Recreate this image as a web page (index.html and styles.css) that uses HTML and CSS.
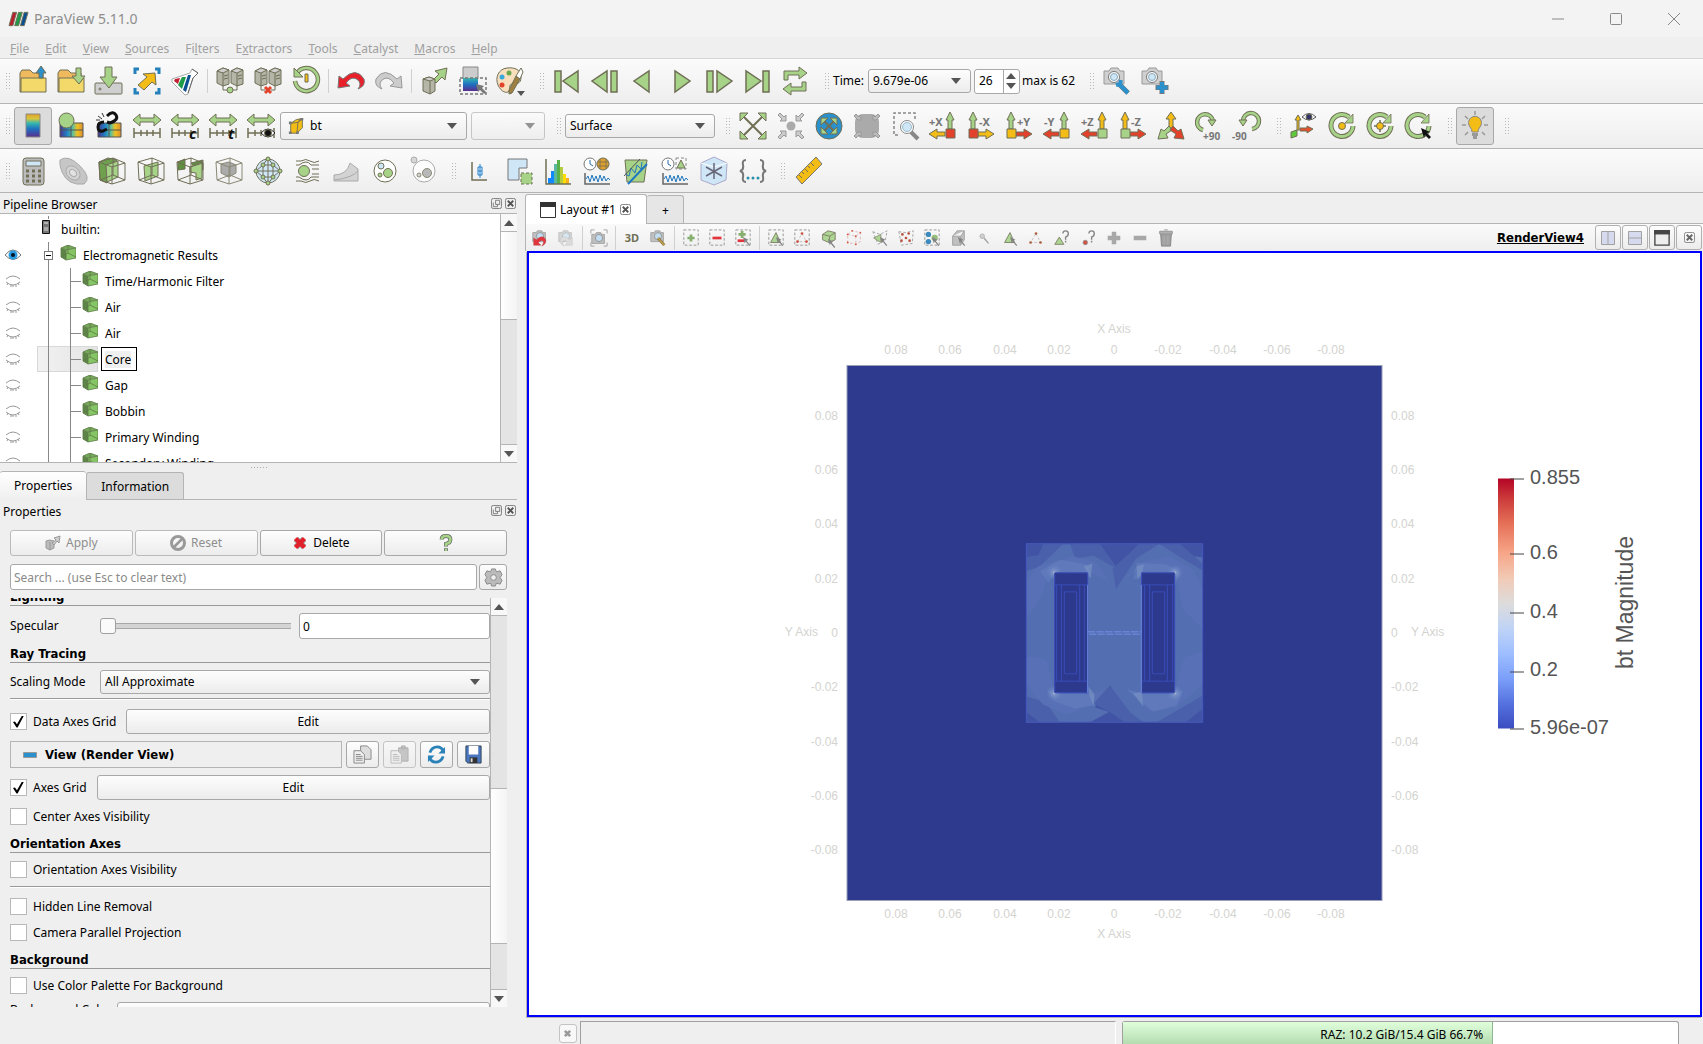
FILE: index.html
```html
<!DOCTYPE html>
<html lang="en">
<head>
<meta charset="utf-8">
<title>ParaView 5.11.0</title>
<link rel="stylesheet" href="styles.css">
</head>
<body>
<svg class="defs" aria-hidden="true">
  <defs>
    <linearGradient id="rainbow" x1="0" y1="0" x2="0" y2="1"><stop offset="0" stop-color="#e2a02c"/><stop offset=".2" stop-color="#d8c43a"/><stop offset=".4" stop-color="#35b8b0"/><stop offset=".65" stop-color="#1f6fc0"/><stop offset="1" stop-color="#5b2e8c"/></linearGradient>
    <linearGradient id="cold" x1="0" y1="0" x2="0" y2="1"><stop offset="0" stop-color="#35b8b0"/><stop offset=".5" stop-color="#1f6fc0"/><stop offset="1" stop-color="#5b2e8c"/></linearGradient>
    <linearGradient id="rainbow-h"><stop offset="0" stop-color="#4b3488"/><stop offset=".3" stop-color="#1f80c8"/><stop offset=".55" stop-color="#58c0a0"/><stop offset=".75" stop-color="#f0c020"/><stop offset="1" stop-color="#d89030"/></linearGradient>
    <linearGradient id="coolwarm" x1="0" y1="0" x2="0" y2="1"><stop offset="0" stop-color="#b40426"/><stop offset=".08" stop-color="#cc3b3a"/><stop offset=".18" stop-color="#e57058"/><stop offset=".3" stop-color="#f7a688"/><stop offset=".4" stop-color="#f1cab6"/><stop offset=".5" stop-color="#dddcdc"/><stop offset=".6" stop-color="#bfd3f6"/><stop offset=".7" stop-color="#9ebeff"/><stop offset=".8" stop-color="#7b9ff9"/><stop offset=".9" stop-color="#5572df"/><stop offset="1" stop-color="#3b4cc0"/></linearGradient>
    <radialGradient id="hot"><stop offset="0" stop-color="#d0d0c8"/><stop offset=".2" stop-color="#8fa6d0" stop-opacity=".6"/><stop offset="1" stop-color="#6c88c6" stop-opacity="0"/></radialGradient>
    <symbol id="folder" viewBox="0 0 30 30"><path class="f-or" d="M2 26V7l2-3h8l3 3h10v6H6L3 26z"/><path class="f-y2" d="M3 12h25v14H3z"/></symbol>
    <symbol id="servers" viewBox="0 0 30 30"><g class="f-gr"><path d="M2 5l6-3 6 2v14l-6 2-6-3zM16 5l6-3 6 2v14l-6 2-6-3z"/></g><path class="f-lg" d="M2 5l6-3 6 2-6 3zM16 5l6-3 6 2-6 3z"/><path d="M8 7v13M22 7v13M9 10l4-1M9 13l4-1M23 10l4-1M23 13l4-1M8 20v4h4M22 20v4h-4"/></symbol>
    <symbol id="range" viewBox="0 0 30 30"><path class="f-g" d="M1 9l7-6v4h14V3l7 6-7 6v-4H8v4z"/><path class="s15" d="M2 17v10M28 17v10M2 22h26M9 19v6M15 19v6M21 19v6"/></symbol>
    <symbol id="box" viewBox="0 0 30 30"><path d="M2 6l14-4 12 5v17l-13 4L3 24zM2 6l13 5 13-4M15 11v17M16 2v17M3 24l13-5 12 5" /></symbol>
    <symbol id="first" viewBox="0 0 30 30"><path class="f-g s15" d="M3 5h6v21H3zM26 5v21L11 15z"/></symbol>
    <symbol id="stepb" viewBox="0 0 30 30"><path class="f-g s15" d="M21 5h6v21h-6zM17 5v21L2 15z"/></symbol>
    <symbol id="playb" viewBox="0 0 30 30"><path class="f-g s15" d="M21 5v21L6 15z"/></symbol>
    <symbol id="camera" viewBox="0 0 30 30"><path class="f-lg" stroke="#999" d="M2 5h5l2-3h7l2 3h4v13H2z"/><circle cx="12" cy="11" r="5.500" class="f-w" stroke="#777"/><circle cx="12" cy="11" r="3.500" class="f-lb" stroke="#8ab"/></symbol>
    <symbol id="viewL" viewBox="0 0 30 30"><path class="v-up" d="M20 18V9h-2l4-8 4 8h-2v9z"/><path class="v-side" d="M17 21H9v-3l-8 5 8 5v-3h8z"/><path class="v-sq" d="M18 18h9v9h-9z"/></symbol>
    <symbol id="viewR" viewBox="0 0 30 30"><path class="v-up" d="M5 18V9H3l4-8 4 8H9v9z"/><path class="v-side" d="M12 21h8v-3l8 5-8 5v-3h-8z"/><path class="v-sq" d="M3 18h9v9H3z"/></symbol>
    <symbol id="spin" viewBox="0 0 30 30"><path d="M22 6a11 11 0 1 0 4 9" stroke-width="5"/><path d="M22 6a11 11 0 1 0 4 9" stroke="#a6d388" stroke-width="3"/><path class="f-g" stroke-width=".8" d="M26 3v9h-8z"/></symbol>
    <symbol id="cube" viewBox="0 0 16 16"><path fill="#5d8449" stroke="none" d="M1 3l5 2v10l-5-3z"/><path fill="#86c566" stroke="none" d="M6 5l10-2v10L6 15z"/><path fill="#75a95a" stroke="none" d="M1 3l7-3 8 3-10 2z"/><path stroke="#5d7a45" stroke-width=".8" d="M1 3l5 2 10-2M6 5v10M1 3v9l5 3 10-2V3L8 0zM8 0v8l-7 4M8 8l8 4"/></symbol>
    <symbol id="shut" viewBox="0 0 16 14"><path stroke="#999" d="M1 5q7-6 14 0M1 8q7 6 14 0M3 9l-1 2M6 11v2M8 11v2M11 11v2M13 9l1 2"/></symbol>
    <symbol id="frame" viewBox="0 0 20 20"><path class="dash" stroke="#888" d="M2 1h16v17H2z"/></symbol>
    <symbol id="pick" viewBox="0 0 20 20"><path stroke="none" fill="#777" d="M10 9l6 3-2 1 4 5-1 1-4-5-1 2z"/></symbol>
    <symbol id="ghost" viewBox="0 0 20 20"><path fill="#bbb" stroke="#999" d="M2 4h4l1-2h5l1 2h3v10H2z"/><circle cx="10" cy="8" r="4" fill="#bcdcf2" stroke="#888"/></symbol>
    <symbol id="clock" viewBox="0 0 30 30"><circle cx="8" cy="8" r="6" class="f-w" stroke="#777"/><path stroke="#2a6aa8" d="M8 4v4l3 2"/><path class="s15" stroke="#666" d="M3 17v11h25"/><path stroke="#1f78c0" d="M4 23l2-3 2 6 2-7 2 6 2-5 2 6 2-7 2 6 2-5 2 5 2-3 2 2"/></symbol>
    <symbol id="pages" viewBox="0 0 20 20"><path fill="#ddd" stroke="#888" d="M8 1h7l4 4v10H8z"/><path fill="#eee" stroke="#888" d="M1 6h7l4 4v9H1z"/><path stroke="#888" d="M3 10h5M3 12h7M3 14h7M3 16h7"/></symbol>
    <symbol id="float" viewBox="0 0 12 12"><rect x=".5" y=".5" width="11" height="11" rx="2" stroke="#777"/><path stroke="#777" d="M5 2.500h4.500v4.500H5zM2.500 5v4.500H7V7"/></symbol>
    <symbol id="close" viewBox="0 0 12 12"><rect x=".5" y=".5" width="11" height="11" rx="2" stroke="#777"/><path stroke="#555" stroke-width="2" d="M3 3l6 6M9 3l-6 6"/></symbol>
  </defs>
</svg>

<header class="titlebar">
  <svg class="logo" viewBox="0 0 20 14"><path fill="#b81f2d" d="M4 0h4L4 14H0z"/><path fill="#1f9a48" d="M10 0h4l-4 14H6z"/><path fill="#0b4f93" d="M16 0h4l-4 14h-4z"/></svg>
  <h1>ParaView 5.11.0</h1>
  <button class="win" aria-label="Minimize"><svg viewBox="0 0 12 12"><path d="M0 6h12"/></svg></button>
  <button class="win" aria-label="Maximize"><svg viewBox="0 0 12 12"><rect x=".5" y=".5" width="11" height="11" rx="1"/></svg></button>
  <button class="win" aria-label="Close"><svg viewBox="0 0 12 12"><path d="M0 0l12 12M12 0L0 12"/></svg></button>
</header>
<nav class="menubar">
  <a href="#"><u>F</u>ile</a><a href="#"><u>E</u>dit</a><a href="#"><u>V</u>iew</a><a href="#"><u>S</u>ources</a><a href="#">Fi<u>l</u>ters</a><a href="#">E<u>x</u>tractors</a><a href="#"><u>T</u>ools</a><a href="#"><u>C</u>atalyst</a><a href="#"><u>M</u>acros</a><a href="#"><u>H</u>elp</a>
</nav>

<div class="toolbar" role="toolbar" aria-label="Main controls">
  <div class="group">
    <i class="grip"></i>
    <button aria-label="Open"><svg viewBox="0 0 30 30"><use href="#folder"/><path class="f-b" d="M23 0l5 7h-3v5h-4V7h-3z"/></svg></button>
    <button aria-label="Load state"><svg viewBox="0 0 30 30"><use href="#folder"/><path class="f-g" d="M20 2h5v8h4l-6 8-7-8h4z"/></svg></button>
    <button aria-label="Save data"><svg viewBox="0 0 30 30"><rect class="f-lg" x="1" y="17" width="27" height="11" rx="1"/><path class="f-g" d="M11 1h7v10h5l-8 11-9-11h5z"/><circle cx="6" cy="23" r="1"/></svg></button>
    <button aria-label="Save screenshot"><svg viewBox="0 0 30 30"><path class="f-y" d="M23 7l1 12-4-3-8 8-6-5 9-8-4-3z"/><path stroke="#2380bb" stroke-width="3" d="M3 8V3h4M23 3h4v5M3 22v5h4M27 22v5h-4"/></svg></button>
    <button aria-label="Save Catalyst state"><svg viewBox="0 0 30 30"><path fill="#fff" stroke="#aaa" d="M22 3l6 4-5 5-5 16-3 1L2 16v-3l18-6z"/><path fill="#c0202f" stroke="none" d="M5 13l5-1-2 6-4-3z"/><path fill="#1f9a48" stroke="none" d="M12 11h4l-4 12-4-4z"/><path fill="#0b4f93" stroke="none" d="M18 9h3l-5 17-3-2z"/><path stroke="#666" d="M22 3l6 4-5 5-5 15"/></svg></button>
    <i class="sep"></i>
    <button aria-label="Connect"><svg viewBox="0 0 30 30"><use href="#servers"/><circle cx="15" cy="24" r="3" class="f-g"/></svg></button>
    <button aria-label="Disconnect"><svg viewBox="0 0 30 30"><use href="#servers"/><path stroke="#e2412b" stroke-width="3" d="M12 21l6 6M18 21l-6 6"/></svg></button>
    <button aria-label="Reset session"><svg viewBox="0 0 30 30"><path d="M6 7a11.500 11.500 0 1 1-2 8" stroke-width="4.500"/><path d="M6 7a11.500 11.500 0 1 1-2 8" stroke="#a6d388" stroke-width="2.500"/><path class="f-g" d="M3 2v9h9z"/><path class="f-y" d="M14 8h3v8h-3z"/></svg></button>
    <i class="sep"></i>
    <button aria-label="Undo"><svg viewBox="0 0 30 30"><path fill="#e8202a" stroke="#777" d="M3 10l-1 12 12-2-4-3q6-8 12-3 4 4 0 9 8-3 6-10Q20 0 7 13z"/></svg></button>
    <button aria-label="Redo"><svg viewBox="0 0 30 30"><path fill="#ccc" stroke="#999" d="M27 10l1 12-12-2 4-3q-6-8-12-3-4 4 0 9-8-3-6-10Q10 0 23 13z"/></svg></button>
    <i class="sep"></i>
    <button aria-label="Auto apply"><svg viewBox="0 0 30 30"><path class="f-g" d="M28 2l-2 12-3-3-6 6-3-3 6-6-4-3z"/><path class="f-gr" d="M4 13l6-2 6 2v12l-5 3-7-3z"/><path class="f-lg" d="M4 13l6-2 6 2-5 2zM11 15v13"/></svg></button>
    <button aria-label="Interactive selection"><svg viewBox="0 0 30 30"><path fill="#ccc" d="M6 1h15v12H6z" stroke="#888"/><path fill="url(#cold)" stroke="none" d="M6 12h15v13H6z"/><path class="dash s15" stroke="#777" d="M3 12h26v16H3z"/><path fill="#777" stroke="none" d="M19 18l8 2-2 2 4 4-2 2-4-4-2 2z"/></svg></button>
    <button aria-label="Color palette"><svg viewBox="0 0 30 30"><path fill="#f7dfbd" d="M12 2C3 3 0 12 3 19s9 9 11 6-1-6 3-7 9 1 9-7C26 4 20 1 12 2z"/><circle cx="14" cy="7" r="2.500" fill="#6aa84a" stroke="none"/><circle cx="7" cy="11" r="2.500" fill="#38a8dd" stroke="none"/><circle cx="7" cy="19" r="2.500" fill="#e2412b" stroke="none"/><path fill="#a08040" d="M21 10l4 3-8 14-3 1v-4z"/><path class="f-w" d="M21 10l5-8 2 4-3 7z"/><path fill="#555" stroke="none" d="M22 25h8l-4 5z"/></svg></button>
  </div>
  <div class="group">
    <i class="grip"></i>
    <button aria-label="First frame"><svg viewBox="0 0 30 30"><use href="#first"/></svg></button>
    <button aria-label="Previous frame"><svg viewBox="0 0 30 30"><use href="#stepb"/></svg></button>
    <button aria-label="Reverse"><svg viewBox="0 0 30 30"><use href="#playb"/></svg></button>
    <button aria-label="Play"><svg class="flip" viewBox="0 0 30 30"><use href="#playb"/></svg></button>
    <button aria-label="Next frame"><svg class="flip" viewBox="0 0 30 30"><use href="#stepb"/></svg></button>
    <button aria-label="Last frame"><svg class="flip" viewBox="0 0 30 30"><use href="#first"/></svg></button>
    <button aria-label="Loop"><svg viewBox="0 0 30 30"><path class="f-g" d="M4 14V5h15V1l8 6-8 6V9H8v5zM26 16v9H11v4l-8-6 8-6v4h11v-5z"/></svg></button>
  </div>
  <div class="group">
    <i class="grip"></i>
    <label for="time">Time:</label>
    <span class="combo w-time"><select id="time"><option>9.679e-06</option></select><i class="arrow"></i></span>
    <span class="spinner"><input aria-label="Time step" value="26"><span class="steps"><i class="arrow up"></i><i class="arrow"></i></span></span>
    <span class="max">max is 62</span>
  </div>
  <div class="group">
    <i class="grip"></i>
    <button aria-label="Adjust camera"><svg viewBox="0 0 30 30"><use href="#camera"/><path stroke="#777" stroke-width="5" d="M17 18l9 9"/><path stroke="#2a91cc" stroke-width="4" d="M17 18l9 9M14 19l4-1 1-4"/></svg></button>
    <button aria-label="Custom viewpoint"><svg viewBox="0 0 30 30"><use href="#camera"/><path stroke="#777" stroke-width="5" d="M22 15v13M15.500 21.500h13"/><path stroke="#2a91cc" stroke-width="4" d="M22 16v11M16.500 21.500h11"/></svg></button>
  </div>
</div>

<div class="toolbar" role="toolbar" aria-label="Color and camera controls">
  <div class="group">
    <i class="grip"></i>
    <button class="on" aria-label="Color legend"><svg viewBox="0 0 30 30"><path fill="url(#rainbow)" stroke="#888" d="M8 3h14v23H8z"/></svg></button>
    <button aria-label="Edit color map"><svg viewBox="0 0 30 30"><path fill="url(#rainbow-h)" stroke="#555" d="M4 12h23v14H4zM4 19h23M15 12v14"/><circle class="f-g" cx="10.500" cy="9.500" r="7.500"/></svg></button>
    <button aria-label="Separate color map"><svg viewBox="0 0 30 30"><path fill="url(#rainbow-h)" stroke="#555" d="M4 12h23v14H4zM4 19h23M15 12v14"/><path stroke="#111" stroke-width="3" d="M10 11q-6 0-6 5t5 4l4-2M13 5q6-6 9-1t-6 8l-3-1"/><path stroke="#333" d="M4 5l4 3M8 2l2 4M2 9h4"/></svg></button>
    <button aria-label="Rescale to data range"><svg viewBox="0 0 30 30"><use href="#range"/></svg></button>
    <button aria-label="Rescale to custom range"><svg viewBox="0 0 30 30"><use href="#range"/><text class="glyph" x="19" y="28">c</text></svg></button>
    <button aria-label="Rescale over time"><svg viewBox="0 0 30 30"><use href="#range"/><text class="glyph" x="20" y="28">t</text></svg></button>
    <button aria-label="Rescale to visible range"><svg viewBox="0 0 30 30"><use href="#range"/><path class="f-w" stroke="#222" d="M15 22q7-8 14 0-7 8-14 0z"/><circle cx="22" cy="22" r="3.500" fill="#111"/></svg></button>
    <span class="combo w-array"><svg viewBox="0 0 20 20"><path class="f-y" d="M3 7l11-5-1 11-3 5H3z"/><path class="f-y" d="M3 7l8-1 3-4-5 1zM11 6l-1 12 6-6V2z"/><path fill="#777" stroke="none" d="M1 5h3v3H1zM1 16h3v3H1zM14 1h3v3h-3zM9 16h3v3H9z"/></svg><select aria-label="Coloring array"><option>bt</option></select><i class="arrow"></i></span>
    <span class="combo w-comp off"><select aria-label="Component" disabled><option></option></select><i class="arrow"></i></span>
  </div>
  <div class="group">
    <i class="grip"></i>
    <span class="combo w-repr"><select aria-label="Representation"><option>Surface</option></select><i class="arrow"></i></span>
  </div>
  <div class="group">
    <i class="grip"></i>
    <button aria-label="Reset camera"><svg viewBox="0 0 30 30"><path stroke-width="2" d="M5 5l20 20M25 5L5 25"/><path class="f-g" d="M2 2h8l-8 8zM28 2v8l-8-8zM2 28v-8l8 8zM28 28h-8l8-8z"/></svg></button>
    <button aria-label="Zoom to data"><svg viewBox="0 0 30 30"><circle cx="15" cy="15" r="4.500" fill="#aaa" stroke="none"/><path fill="#ccc" stroke="#999" d="M10 10V4L8 6 4 2 2 4l4 4-2 2zM20 10V4l2 2 4-4 2 2-4 4 2 2zM10 20v6l-2-2-4 4-2-2 4-4-2-2zM20 20v6l2-2 4 4 2-2-4-4 2-2z"/></svg></button>
    <button aria-label="Reset camera closest"><svg viewBox="0 0 30 30"><circle cx="15" cy="15" r="13" class="f-b"/><path stroke-width="2" d="M9 9l12 12M21 9L9 21"/><path class="f-g" d="M7 7h7l-7 7zM23 7v7l-7-7zM7 23v-7l7 7zM23 23h-7l7-7z"/></svg></button>
    <button aria-label="Zoom closest to data"><svg viewBox="0 0 30 30"><rect x="3" y="3" width="24" height="24" rx="8" fill="#aaa" stroke="none"/><path fill="#bbb" stroke="#999" d="M9 9V4L7 6 4 3 2 5l4 4zM21 9V4l2 2 3-3 2 2-4 4zM9 21v5l-2-2-3 3-2-2 4-4zM21 21v5l2-2 3 3 2-2-4-4z"/></svg></button>
    <button aria-label="Zoom to box"><svg viewBox="0 0 30 30"><path class="dash s15" stroke="#888" d="M25 8V2H4v22h6"/><path stroke="#888" stroke-width="4" d="M21 21l7 7"/><circle cx="17" cy="16" r="6.500" class="f-w" stroke="#888"/><circle cx="17" cy="16" r="4.500" class="f-lb" stroke="#9bc"/></svg></button>
    <button aria-label="Plus X"><svg class="ax-x" viewBox="0 0 30 30"><use href="#viewL"/><text class="axis" x="1" y="15">+X</text></svg></button>
    <button aria-label="Minus X"><svg class="ax-x" viewBox="0 0 30 30"><use href="#viewR"/><text class="axis" x="13" y="15">-X</text></svg></button>
    <button aria-label="Plus Y"><svg class="ax-y" viewBox="0 0 30 30"><use href="#viewR"/><text class="axis" x="13" y="15">+Y</text></svg></button>
    <button aria-label="Minus Y"><svg class="ax-y" viewBox="0 0 30 30"><use href="#viewL"/><text class="axis" x="2" y="15">-Y</text></svg></button>
    <button aria-label="Plus Z"><svg class="ax-z" viewBox="0 0 30 30"><use href="#viewL"/><text class="axis" x="1" y="15">+Z</text></svg></button>
    <button aria-label="Minus Z"><svg class="ax-z" viewBox="0 0 30 30"><use href="#viewR"/><text class="axis" x="13" y="15">-Z</text></svg></button>
    <button aria-label="Isometric view"><svg viewBox="0 0 30 30"><path class="f-y" d="M15 1l5 7h-3v9h-4V8h-3z"/><path class="f-g" d="M13 15l3 4-6 4 2 4-10 1 3-10 3 2z"/><path class="f-r" d="M17 15l-3 4 6 4-2 4 10 1-3-10-3 2z"/></svg></button>
    <button aria-label="Rotate 90 clockwise"><svg viewBox="0 0 30 30"><path d="M9 19a8 8 0 1 1 10-9" stroke-width="4.500"/><path d="M9 19a8 8 0 1 1 10-9" stroke="#a6d388" stroke-width="2.500"/><path class="f-g" d="M14 9h8l-4 6z"/><text class="deg" x="9" y="29">+90</text></svg></button>
    <button aria-label="Rotate 90 counterclockwise"><svg viewBox="0 0 30 30"><path d="M20 18a8 8 0 1 0-9-8" stroke-width="4.500"/><path d="M20 18a8 8 0 1 0-9-8" stroke="#a6d388" stroke-width="2.500"/><path class="f-g" d="M7 9h8l-4 6z"/><text class="deg" x="0" y="29">-90</text></svg></button>
  </div>
  <div class="group">
    <i class="grip"></i>
    <button aria-label="Show orientation axes"><svg viewBox="0 0 30 30"><path class="f-y" d="M8 19V9H6l3-5 3 5h-2v10z"/><path fill="#e8502b" d="M11 17h7v-2l6 3-6 4v-2h-7z"/><path fill="#5fc83a" d="M8 19l-6 2v6l6-2z"/><path class="f-w" stroke="#555" d="M13 6q7-7 14 0-7 6-14 0z"/><circle cx="20" cy="6" r="3" fill="#336"/></svg></button>
    <button aria-label="Show center"><svg viewBox="0 0 30 30"><use href="#spin"/><circle cx="15" cy="15" r="3.500" class="f-y"/></svg></button>
    <button aria-label="Reset center"><svg viewBox="0 0 30 30"><use href="#spin"/><path stroke-width="1.500" d="M15 9v12M9 15h12"/><circle cx="15" cy="15" r="3.500" class="f-y"/></svg></button>
    <button aria-label="Pick center"><svg viewBox="0 0 30 30"><use href="#spin"/><path fill="#111" stroke="none" d="M18 17l9 4-3 1 4 4-2 2-4-4-1 3z"/></svg></button>
  </div>
  <div class="group">
    <i class="grip"></i>
    <button class="on" aria-label="Light kit"><svg viewBox="0 0 30 30"><path class="f-y" stroke="#888" d="M12 21q0-3-2-5a6.500 6.500 0 1 1 10 0q-2 2-2 5z"/><path stroke="#999" stroke-width="3" d="M12 23.500h6M13 26.500h4"/><path class="s15" stroke="#999" d="M15 0v4M5 5l3 3M25 5l-3 3M2 14h4M28 14h-4M5 24l3-3M25 24l-3-3"/></svg></button>
  </div>
  <div class="group"><i class="grip"></i></div>
</div>

<div class="toolbar filters" role="toolbar" aria-label="Filters">
  <div class="group">
    <i class="grip"></i>
    <button aria-label="Calculator"><svg viewBox="0 0 30 30"><rect x="4" y="2" width="21" height="27" rx="3" fill="#bbb"/><path class="f-lb" d="M7 5h15v5H7z"/><path stroke-width="3" stroke-dasharray="3 3" d="M7 15h15M7 20h15M7 25h15"/></svg></button>
    <button class="off" aria-label="Contour"><svg viewBox="0 0 30 30"><path fill="#bbb" stroke="#999" d="M2 4Q10-2 22 10t4 18Q10 30 4 16 1 9 2 4z"/><ellipse cx="15" cy="17" rx="8" ry="6" fill="#ccc" stroke="#999" transform="rotate(45 15 17)"/><ellipse cx="15" cy="17" rx="4" ry="3" fill="#ddd" stroke="#999" transform="rotate(45 15 17)"/></svg></button>
    <button aria-label="Clip"><svg viewBox="0 0 30 30"><path fill="#6fa04e" d="M2 6l9-4 9 2-10 6v17l-7-3z"/><path class="f-g" d="M9 9l12-4v16L10 26z"/><use href="#box"/></svg></button>
    <button aria-label="Slice"><svg viewBox="0 0 30 30"><path class="f-g" d="M8 10l14-4v14L9 25z"/><use href="#box"/></svg></button>
    <button aria-label="Threshold"><svg viewBox="0 0 30 30"><path fill="#5f9040" d="M3 6l7-3v10l-7 1zM16 7l12-3v10l-5 1z"/><path class="f-g" d="M15 11l12-5v16l-6 2v-7l-6-1z"/><use href="#box"/></svg></button>
    <button class="off" aria-label="Extract subset"><svg viewBox="0 0 30 30"><path fill="#999" d="M7 8l8-2 7 3v8l-7 4-8-4z"/><use href="#box"/></svg></button>
    <button aria-label="Glyph"><svg viewBox="0 0 30 30"><circle cx="15" cy="15" r="12" fill="#cfe6f7"/><path d="M2 15h26M15 2v26M10 9h10v12H10zM10 9L3 15l7 6 5 7 5-7 7-6-7-6-5-7z"/><g class="f-g"><circle cx="15" cy="3" r="2"/><circle cx="15" cy="27" r="2"/><circle cx="3" cy="15" r="2"/><circle cx="27" cy="15" r="2"/><circle cx="10" cy="9" r="2"/><circle cx="20" cy="9" r="2"/><circle cx="10" cy="21" r="2"/><circle cx="20" cy="21" r="2"/></g></svg></button>
    <button aria-label="Stream tracer"><svg viewBox="0 0 30 30"><path d="M4 5h5q5-3 9 0t9 0M4 9h3q8-6 12 0h8M20 13h7M20 18h7M4 21h3q8 6 12 0h8M4 25h5q5 3 9 0t9 0"/><circle class="f-g" cx="12" cy="15" r="5.500"/></svg></button>
    <button class="off" aria-label="Warp"><svg viewBox="0 0 30 30"><path fill="#ccc" stroke="#999" d="M3 19q13 0 16-12l8 6v12H3z"/><path stroke="#999" d="M3 24q18-2 24-9"/></svg></button>
    <button aria-label="Group datasets"><svg viewBox="0 0 30 30"><circle cx="15" cy="15" r="11" class="f-w"/><circle cx="11" cy="10" r="3" class="f-lb"/><circle cx="18" cy="17" r="4.500" class="f-g"/><circle cx="10" cy="19" r="2" class="f-g"/></svg></button>
    <button class="off" aria-label="Extract group"><svg viewBox="0 0 30 30"><circle cx="15" cy="15" r="11" class="f-w" stroke="#999"/><circle cx="5" cy="4" r="3" class="f-lg" stroke="#999"/><circle cx="18" cy="17" r="4.500" fill="#aaa"/><circle cx="10" cy="19" r="2" fill="#ccc"/></svg></button>
  </div>
  <div class="group">
    <i class="grip"></i>
    <button aria-label="Plot over line"><svg viewBox="0 0 30 30"><path class="s15" d="M7 6v18h15"/><path stroke="#2380cc" d="M15 8v14M13 11h4v8h-4zM13 15h4"/></svg></button>
    <button aria-label="Extract selection"><svg viewBox="0 0 30 30"><path class="f-lb" stroke="#777" d="M4 3h19v9h-8v12H4z"/><path class="f-g dash" d="M17 17h11v11H17z"/></svg></button>
    <button aria-label="Histogram"><svg viewBox="0 0 30 30"><path stroke="none" fill="#18f" d="M5 22h3v6H5zM8 15h3v13H8z"/><path stroke="none" fill="#5ab8a0" d="M11 8h3v20h-3z"/><path stroke="none" fill="#58b048" d="M14 4h3v24h-3z"/><path stroke="none" fill="#b4cc40" d="M17 11h3v17h-3z"/><path stroke="none" fill="#fd0" d="M20 18h3v10h-3z"/><path stroke="none" fill="#f8b020" d="M23 22h3v6h-3z"/><path class="s15" d="M3 3v25h25"/></svg></button>
    <button aria-label="Plot global variables over time"><svg viewBox="0 0 30 30"><use href="#clock"/><circle cx="21" cy="8" r="6" fill="#e0a030"/><path d="M18 3v10M24 3v10M16 6h10M16 10h10" stroke-width=".8"/></svg></button>
    <button aria-label="Plot on intersection"><svg viewBox="0 0 30 30"><path class="f-g" d="M4 4h22l-3 22H6z"/><path stroke="#1f78c0" d="M4 18l4 2 2-8 4 5 2-8 4 4 1-7"/><path stroke="#555" d="M3 20L19 3"/><path stroke="#1f78c0" stroke-width="2" d="M7 28L26 8"/></svg></button>
    <button aria-label="Plot selection over time"><svg viewBox="0 0 30 30"><use href="#clock"/><path class="dash" stroke="#888" d="M16 2h10v11H16z"/><path class="f-g" d="M21 4l4 8h-8z"/></svg></button>
    <button aria-label="Probe location"><svg viewBox="0 0 30 30"><path fill="#cfe6f7" stroke="#aac" d="M15 1l13 6-1 17-12 5-13-5V7z"/><path stroke="#fff" d="M2 7l13 4 13-4"/><path class="s15" stroke="#667" d="M15 7v16M7 11l16 9M23 11L7 20"/></svg></button>
    <button aria-label="Programmable filter"><svg viewBox="0 0 30 30"><path stroke="#777" stroke-width="2" d="M8 4Q4 4 5 9t-3 6q4 1 3 6t3 5M22 4q4 0 3 5t3 6q-4 1-3 6t-3 5"/><g fill="#2a91aa" stroke="none"><circle cx="10" cy="22" r="1.500"/><circle cx="15" cy="22" r="1.500"/><circle cx="20" cy="22" r="1.500"/></g></svg></button>
  </div>
  <div class="group">
    <i class="grip"></i>
    <button aria-label="Ruler"><svg viewBox="0 0 30 30"><path class="f-y" stroke="#777" d="M22 1l6 7L8 28l-6-7z"/><path d="M5 19l3 3M8 16l2 2M11 13l3 3M14 10l2 2M17 7l3 3"/></svg></button>
  </div>
</div>

<main class="workspace">
  <aside class="side">
    <section class="pipeline">
      <div class="dock-title"><h2>Pipeline Browser</h2><button aria-label="Float"><svg><use href="#float"/></svg></button><button aria-label="Close"><svg><use href="#close"/></svg></button></div>
      <div class="tree">
        <ul>
          <li><span class="eye"></span><span class="lead"><i class="guide stub"><svg class="server" viewBox="0 0 8 14"><path fill="#777" stroke="#111" d="M.5 .5h7v13h-7z"/><path stroke="#eee" d="M2 3h4"/><path stroke="#ddd" d="M2 8h4M2 10h4"/></svg></i></span><span class="name"><b>builtin:</b></span></li>
          <li><span class="eye"><svg class="open" viewBox="0 0 18 12"><path fill="#fff" stroke="#777" d="M1 6q8-10 16 0-8 9-16 0z"/><circle cx="9" cy="6" r="4.500" fill="#2a9be0" stroke="none"/><circle cx="9" cy="6" r="2" fill="#012" stroke="none"/></svg></span><span class="lead"><i class="guide line"><em></em></i><svg class="cube"><use href="#cube"/></svg></span><span class="name"><b>Electromagnetic Results</b></span></li>
          <li><span class="eye"><svg><use href="#shut"/></svg></span><span class="lead"><i class="guide line"></i><i class="guide line branch"></i><svg class="cube"><use href="#cube"/></svg></span><span class="name"><b>Time/Harmonic Filter</b></span></li>
          <li><span class="eye"><svg><use href="#shut"/></svg></span><span class="lead"><i class="guide line"></i><i class="guide line branch"></i><svg class="cube"><use href="#cube"/></svg></span><span class="name"><b>Air</b></span></li>
          <li><span class="eye"><svg><use href="#shut"/></svg></span><span class="lead"><i class="guide line"></i><i class="guide line branch"></i><svg class="cube"><use href="#cube"/></svg></span><span class="name"><b>Air</b></span></li>
          <li class="current"><span class="eye"><svg><use href="#shut"/></svg></span><span class="lead"><i class="guide line"></i><i class="guide line branch"></i><svg class="cube"><use href="#cube"/></svg></span><span class="name"><b>Core</b></span></li>
          <li><span class="eye"><svg><use href="#shut"/></svg></span><span class="lead"><i class="guide line"></i><i class="guide line branch"></i><svg class="cube"><use href="#cube"/></svg></span><span class="name"><b>Gap</b></span></li>
          <li><span class="eye"><svg><use href="#shut"/></svg></span><span class="lead"><i class="guide line"></i><i class="guide line branch"></i><svg class="cube"><use href="#cube"/></svg></span><span class="name"><b>Bobbin</b></span></li>
          <li><span class="eye"><svg><use href="#shut"/></svg></span><span class="lead"><i class="guide line"></i><i class="guide line branch"></i><svg class="cube"><use href="#cube"/></svg></span><span class="name"><b>Primary Winding</b></span></li>
          <li><span class="eye"><svg><use href="#shut"/></svg></span><span class="lead"><i class="guide line"></i><i class="guide line branch"></i><svg class="cube"><use href="#cube"/></svg></span><span class="name"><b>Secondary Winding</b></span></li>
        </ul>
        <div class="scroll tree-scroll"><span class="end"><i class="arrow up"></i></span><span class="thumb"></span><span class="rest"></span><span class="end"><i class="arrow"></i></span></div>
      </div>
    </section>
    <div class="splitter"><i></i></div>
    <section class="props">
      <div class="tabs"><button class="tab active">Properties</button><button class="tab">Information</button></div>
      <div class="dock-title"><h2>Properties</h2><button aria-label="Float"><svg><use href="#float"/></svg></button><button aria-label="Close"><svg><use href="#close"/></svg></button></div>
      <div class="actions">
        <button class="push" disabled><svg viewBox="0 0 16 16"><path fill="#bbb" stroke="#999" d="M1 6l4-1 4 1v7l-4 2-4-2zM5 7v8"/><path fill="#ccc" stroke="#999" d="M15 1l-1 7-2-2-3 4-2-2 4-3-2-2z"/></svg>Apply</button>
        <button class="push" disabled><svg viewBox="0 0 16 16"><circle cx="8" cy="8" r="6.500" stroke="#999" stroke-width="3"/><path stroke="#999" stroke-width="2.500" d="M4 12l8-8"/></svg>Reset</button>
        <button class="push"><svg viewBox="0 0 16 16"><path stroke="#999" stroke-width="6" d="M4 4l8 8M12 4l-8 8"/><path stroke="#e2202a" stroke-width="4.500" d="M3.500 3.500l9 9M12.500 3.500l-9 9"/></svg>Delete</button>
        <button class="push" aria-label="Help"><svg class="help" viewBox="0 0 16 20"><path stroke="#666" stroke-width="4.500" d="M3 6q0-4 5-4t5 4-5 5v3M8 16v3"/><path stroke="#a6d388" stroke-width="3" d="M3 6q0-4 5-4t5 4-5 5v2.500M8 16.500v2.500"/></svg></button>
      </div>
      <div class="search"><input aria-label="Search" placeholder="Search ... (use Esc to clear text)"><button class="push" aria-label="Advanced"><svg viewBox="0 0 20 20"><path fill="#bbb" stroke="#888" d="M8 1h4l1 3 4-1 2 4-2 3 2 3-2 4-4-1-1 3H8l-1-3-4 1-2-4 2-3-2-3 2-4 4 1z"/><circle cx="10" cy="10" r="3" fill="#eee" stroke="#888"/></svg></button></div>
      <div class="panel">
        <div class="fields">
          <h3>Lighting</h3>
          <div class="row tall"><label class="cap" for="spec">Specular</label><input id="spec" type="range" min="0" max="1" value="0"><input class="num" aria-label="Specular value" value="0"></div>
          <h3>Ray Tracing</h3>
          <div class="row"><label class="cap" for="scale">Scaling Mode</label><span class="combo grow"><select id="scale"><option>All Approximate</option></select><i class="arrow"></i></span></div>
          <hr class="tight">
          <div class="row"><label class="check"><input type="checkbox" checked>Data Axes Grid</label><button class="push grow">Edit</button></div>
          <div class="row view-row"><h3 class="view-title"><svg viewBox="0 0 14 6"><path fill="#2a91cc" stroke="#999" d="M.5 .5h13v5H.5z"/></svg>View (Render View)</h3>
            <button class="push" aria-label="Copy"><svg viewBox="0 0 20 20"><use href="#pages"/></svg></button><button class="push off" aria-label="Paste"><svg viewBox="0 0 20 20"><path fill="#aaa" stroke="#888" d="M9 3h10v14H9zM12 1h4v3h-4z"/><path fill="#eee" stroke="#999" d="M1 6h7l4 4v9H1z"/><path stroke="#999" d="M3 10h5M3 12h7M3 14h7M3 16h7"/></svg></button><button class="push" aria-label="Reload"><svg viewBox="0 0 20 20"><path stroke="#2a82b8" stroke-width="3" d="M3 8q2-6 8-6 4 0 6 4M17 12q-2 6-8 6-4 0-6-4"/><path fill="#2a82b8" stroke="none" d="M19 2v7h-7zM1 18v-7h7z"/></svg></button><button class="push" aria-label="Save"><svg viewBox="0 0 20 20"><path fill="#4a76c0" stroke="#345" d="M2 1h16v18H4l-2-2z"/><path fill="#fff" stroke="none" d="M5 1h10v9H5z"/><path fill="#333" stroke="none" d="M6 13h8v6H6z"/><path fill="#ddd" stroke="none" d="M7 14h2v4H7z"/></svg></button></div>
          <div class="row"><label class="check"><input type="checkbox" checked>Axes Grid</label><button class="push grow">Edit</button></div>
          <label class="check"><input type="checkbox">Center Axes Visibility</label>
          <h3 class="apart">Orientation Axes</h3>
          <label class="check"><input type="checkbox">Orientation Axes Visibility</label>
          <hr>
          <label class="check"><input type="checkbox">Hidden Line Removal</label>
          <label class="check"><input type="checkbox">Camera Parallel Projection</label>
          <h3 class="apart">Background</h3>
          <label class="check"><input type="checkbox">Use Color Palette For Background</label>
          <div class="row color-row"><span>Background Color</span><button class="push grow" aria-label="Background Color"></button></div>
        </div>
        <div class="scroll panel-scroll"><span class="end"><i class="arrow up"></i></span><span class="rest"></span><span class="thumb"></span><span class="rest last"></span><span class="end"><i class="arrow"></i></span></div>
      </div>
    </section>
  </aside>
  <section class="layout">
    <div class="layout-tabs"><div class="ltab active"><svg class="winicon" viewBox="0 0 16 16"><path fill="#fff" stroke="#333" d="M.5 .5h15v15H.5z"/><path fill="#333" stroke="none" d="M0 0h16v5H0z"/></svg>Layout #1<button aria-label="Close layout"><svg><use href="#close"/></svg></button></div><button class="ltab">+</button></div>
    <div class="viewbar" role="toolbar" aria-label="View">
      <button aria-label="Camera undo"><svg viewBox="0 0 20 20"><use href="#ghost"/><path fill="#e2202a" stroke="#a33" stroke-width=".5" d="M3 10v8h8l-3-3q4-4 6-1 0 3-2 5 6-3 4-8-4-5-10 1z"/></svg></button>
      <button class="off" aria-label="Camera redo"><svg viewBox="0 0 20 20"><use href="#ghost"/><path fill="#ccc" stroke="#999" stroke-width=".5" d="M17 10v8H9l3-3q-4-4-6-1 0 3 2 5-6-3-4-8 4-5 10 1z"/></svg></button>
      <i class="sep"></i>
      <button aria-label="Capture screenshot"><svg viewBox="0 0 20 20"><use href="#ghost" y="2"/><path stroke="#999" d="M1 5V1h4M15 1h4v4M1 15v4h4M19 15v4h-4"/></svg></button>
      <i class="sep"></i>
      <button class="threed">3D</button>
      <button aria-label="Adjust camera"><svg viewBox="0 0 20 20"><use href="#ghost"/><path stroke="#8a7030" stroke-width="3" d="M10 10l7 8"/><path stroke="#d8b040" d="M10 10l7 8"/></svg></button>
      <i class="sep"></i>
      <button aria-label="Add selection"><svg viewBox="0 0 20 20"><use href="#frame"/><path stroke="#7aa860" stroke-width="3" d="M10 6v8M6 10h8"/></svg></button>
      <button aria-label="Subtract selection"><svg viewBox="0 0 20 20"><use href="#frame"/><path stroke="#e2202a" stroke-width="3" d="M5 10h10"/></svg></button>
      <button aria-label="Toggle selection"><svg viewBox="0 0 20 20"><use href="#frame"/><path stroke="#7aa860" stroke-width="3" d="M9 2v8M5 6h8"/><path stroke="#e2202a" stroke-width="3" d="M4 13h8"/><use href="#pick"/></svg></button>
      <i class="sep"></i>
      <button aria-label="Select cells"><svg viewBox="0 0 20 20"><use href="#frame"/><path class="f-g" d="M10 4l5 11H4z"/><use href="#pick"/></svg></button>
      <button aria-label="Select points"><svg viewBox="0 0 20 20"><use href="#frame"/><path class="dash" stroke="#bbb" d="M10 5l5 9H5z"/><g fill="#c5402b" stroke="none"><circle cx="10" cy="5" r="1.500"/><circle cx="5" cy="14" r="1.500"/><circle cx="15" cy="14" r="1.500"/></g></svg></button>
      <button aria-label="Select cells through"><svg viewBox="0 0 20 20"><path class="f-g" d="M4 6l6-4 8 2v8l-7 3-7-3z"/><path d="M4 6l8 2 6-4M12 8l-1 7"/><use href="#pick" y="2"/></svg></button>
      <button aria-label="Select points through"><svg viewBox="0 0 20 20"><path class="dash" stroke="#c99" stroke-width=".7" d="M3 6l5-4 9 2v10l-5 3-9-2zM3 6l9 2 5-4M12 8v9"/><g fill="#d5402b" stroke="none"><circle cx="3" cy="6" r="1"/><circle cx="8" cy="2" r="1"/><circle cx="17" cy="4" r="1"/><circle cx="12" cy="8" r="1"/><circle cx="3" cy="15" r="1"/><circle cx="12" cy="17" r="1"/></g></svg></button>
      <button aria-label="Select cells with polygon"><svg viewBox="0 0 20 20"><path class="dash" stroke="#999" d="M2 3l8 3 8-4-2 10-8 5z"/><path class="f-g" stroke-width=".8" d="M3 10l8-4v9z"/><use href="#pick"/></svg></button>
      <button aria-label="Select points with polygon"><svg viewBox="0 0 20 20"><path class="dash" stroke="#999" d="M2 3l8 1 8-2-1 14-12 2z"/><g fill="#b5402b" stroke="none"><circle cx="6" cy="6" r="1.500"/><circle cx="13" cy="5" r="1.500"/><circle cx="10" cy="10" r="1.500"/><circle cx="5" cy="13" r="1.500"/><circle cx="14" cy="13" r="1.500"/></g></svg></button>
      <button aria-label="Select blocks"><svg viewBox="0 0 20 20"><use href="#frame"/><g stroke="none"><circle cx="6" cy="6" r="3" fill="#2a80b8"/><circle cx="6" cy="14" r="3" fill="#2a80b8"/><circle cx="13" cy="10" r="3.500" fill="#8cb870"/></g><use href="#pick"/></svg></button>
      <button aria-label="Select block in frustum"><svg viewBox="0 0 20 20"><path fill="#bbb" stroke="#999" d="M4 8l5-6h8v10l-4 6H4zM4 8h9l4-6M13 8v10"/><use href="#pick"/></svg></button>
      <button aria-label="Hover points"><svg viewBox="0 0 20 20"><circle cx="8" cy="8" r="2.500" fill="#ccc" stroke="#aaa"/><path stroke="#999" stroke-width="1.500" d="M10 10l5 6"/></svg></button>
      <button aria-label="Interactive select cells"><svg viewBox="0 0 20 20"><path class="f-g" d="M10 4l5 11H4z"/><use href="#pick"/></svg></button>
      <button aria-label="Interactive select points"><svg viewBox="0 0 20 20"><path stroke="#bbb" class="dash" d="M10 5l5 10H4z"/><g fill="#a5502b" stroke="none"><circle cx="10" cy="5" r="1.500"/><circle cx="4" cy="15" r="1.500"/><circle cx="15" cy="15" r="1.500"/></g></svg></button>
      <button aria-label="Hover cells"><svg viewBox="0 0 20 20"><path class="f-g" d="M7 9l5 8H2z"/><path stroke="#777" stroke-width="1.500" d="M11 5q0-3 3-3t3 3-3 4v3M14 13v2"/></svg></button>
      <button aria-label="Hover point query"><svg viewBox="0 0 20 20"><circle cx="7" cy="15" r="2.500" fill="#d5402b" stroke="#888"/><path stroke="#777" stroke-width="1.500" d="M11 5q0-3 3-3t3 3-3 4v3M14 13v2"/></svg></button>
      <button aria-label="Grow selection"><svg viewBox="0 0 20 20"><path stroke="#a0a0a0" stroke-width="5" d="M10 3v14M3 10h14"/></svg></button>
      <button aria-label="Shrink selection"><svg viewBox="0 0 20 20"><path stroke="#a0a0a0" stroke-width="5" d="M3 10h14"/></svg></button>
      <button aria-label="Clear selection"><svg viewBox="0 0 20 20"><path fill="#999" stroke="#777" d="M4 5h12l-1 14H5z"/><path fill="#aaa" stroke="#888" d="M3 2.500h14v3H3zM8 1h4"/><path stroke="#aaa" d="M8 8v9M12 8v9"/></svg></button>
      <a class="view-name" href="#">RenderView4</a>
      <button class="box" aria-label="Split horizontal"><svg viewBox="0 0 16 16"><path fill="#d3d8ee" stroke="#999" d="M1.500 1.500h13v13h-13zM8 1v14"/></svg></button>
      <button class="box" aria-label="Split vertical"><svg viewBox="0 0 16 16"><path fill="#d3d8ee" stroke="#999" d="M1.500 1.500h13v13h-13zM1 8h14"/></svg></button>
      <button class="box" aria-label="Maximize"><svg class="big" viewBox="0 0 18 18"><path fill="#eee" stroke="#333" stroke-width="1.500" d="M1 1h16v16H1z"/><path fill="#333" stroke="none" d="M0 0h18v5H0z"/></svg></button>
      <button class="box" aria-label="Close view"><svg class="small"><use href="#close"/></svg></button>
    </div>
    <div class="canvas">
      <svg viewBox="0 1 1171 761" role="img" aria-label="bt Magnitude field">
        <rect x="318" y="113" width="535" height="535" fill="#2e3a8d" stroke="#9aa0b8"/>
        <g class="ticks mid"><text x="585" y="80">X Axis</text><text x="585" y="685">X Axis</text>
          <text x="367" y="101">0.08</text><text x="421" y="101">0.06</text><text x="476" y="101">0.04</text><text x="530" y="101">0.02</text><text x="585" y="101">0</text><text x="639" y="101">-0.02</text><text x="694" y="101">-0.04</text><text x="748" y="101">-0.06</text><text x="802" y="101">-0.08</text>
          <text x="367" y="665">0.08</text><text x="421" y="665">0.06</text><text x="476" y="665">0.04</text><text x="530" y="665">0.02</text><text x="585" y="665">0</text><text x="639" y="665">-0.02</text><text x="694" y="665">-0.04</text><text x="748" y="665">-0.06</text><text x="802" y="665">-0.08</text></g>
        <g class="ticks end"><text x="289" y="383">Y Axis</text>
          <text x="309" y="167">0.08</text><text x="309" y="221">0.06</text><text x="309" y="275">0.04</text><text x="309" y="330">0.02</text><text x="309" y="384">0</text><text x="309" y="438">-0.02</text><text x="309" y="493">-0.04</text><text x="309" y="547">-0.06</text><text x="309" y="601">-0.08</text></g>
        <g class="ticks"><text x="882" y="383">Y Axis</text>
          <text x="862" y="167">0.08</text><text x="862" y="221">0.06</text><text x="862" y="275">0.04</text><text x="862" y="330">0.02</text><text x="862" y="384">0</text><text x="862" y="438">-0.02</text><text x="862" y="493">-0.04</text><text x="862" y="547">-0.06</text><text x="862" y="601">-0.08</text></g>
        <svg x="481" y="277" width="210" height="210" viewBox="0 0 630 630">
          <rect x="49" y="43" width="529" height="535" fill="#546eb2"/>
          <g stroke="none">
            <path fill="#4053a4" d="M49 43h65L85 78l-36 5zM268 43h120l-35 37-31 37zM510 43h68v40l-53-5zM49 578v-45l40 10 22 35zM578 578v-45l-30 12-38 33zM240 578l60-32 45 32zM300 470l35 50-35 28-45-15z"/>
            <path fill="#4a60aa" d="M49 83l36-5 15-35h60L90 110l-41 15zM180 43h90l50 75-70-40-55 10zM388 43h60l-70 45-60 90-10-60zM448 43h62l68 60v20l-60-35zM300 548l-50-25 50-55 60 80 40 30h-55zM49 500l60 20 40 58h-60l-40-30zM440 578l70-40 68-40v40l-50 40z"/>
            <path fill="#5871b6" d="M85 110l105-30 70 20 40 60-55-30-130-5-20 80-45 60V150zM340 150l60-55 80-15 70 40 28 60v120l-60-60-20-110-110-10zM49 380l60 10 25 100 115 5 40-20-40 50-80 30-70-30-50-60zM345 470l50 25h100l25-110 58-20v100l-80 70-80 10z"/>
            <path fill="#6681bf" opacity=".5" d="M90 125l60-35 80 15 15 40-110-15-20 30zM370 150l10-50 90 5 40 25-15 40-3-40zM110 480l25 12 110 0 10 35-60 10-60-20zM350 480l50 12 90 0 30-10-20 45-70 20z"/>
            <path fill="#7b96c4" opacity=".6" d="M222 110l25-8-5 45-10-18zM380 110l22-5-6 28-14 15zM370 492l26-5 4 45zM234 470l20 25-4 35-14-40z"/>
          </g>
          <g fill="url(#hot)" stroke="none"><circle cx="133" cy="129" r="24"/><circle cx="495" cy="129" r="24"/><circle cx="133" cy="491" r="24"/><circle cx="495" cy="491" r="24"/></g>
          <g fill="#2d398d" stroke="#3a4cb8" stroke-width="3"><path d="M134 130h99v360h-99zM395 130h99v360h-99z"/><path d="M134 166h99M134 455h99M140 166v289M154 166v289M209 166v289M223 166v289M163 187h37v246h-37zM395 166h99M395 455h99M404 166v289M419 166v289M472 166v289M488 166v289M427 187h37v246h-37z"/></g>
          <path stroke="#6a86dd" stroke-width="3" d="M233 166v324M394 166v324"/>
          <path stroke="#7390e6" stroke-width="3" stroke-dasharray="22 4" d="M233 307h161M237 314h157"/>
          <rect x="49" y="43" width="529" height="535" fill="none" stroke="#4257c4" stroke-width="3"/>
        </svg>
        <rect x="969" y="226" width="16" height="250" fill="url(#coolwarm)" stroke="none"/>
        <path stroke="#444" d="M981 226.500h14M981 301.500h14M981 360.500h14M981 419.500h14M981 476.500h14"/>
        <g class="legend"><text x="1001" y="231">0.855</text><text x="1001" y="306">0.6</text><text x="1001" y="365">0.4</text><text x="1001" y="423">0.2</text><text x="1001" y="481">5.96e-07</text><text class="legend-title" transform="translate(1104 350) rotate(-90)">bt Magnitude</text></g>
      </svg>
    </div>
  </section>
</main>
<footer class="status">
  <span class="msg"></span>
  <button aria-label="Abort"><svg viewBox="0 0 8 8"><path stroke="#999" stroke-width="3" d="M1 1l6 6M7 1L1 7"/></svg></button>
  <span class="well"></span>
  <div class="memory" role="progressbar" aria-valuenow="66.7"><div class="fill" style="width:66.7%">RAZ: 10.2 GiB/15.4 GiB 66.7%</div></div>
</footer>
</body>
</html>
```
FILE: styles.css
```css
* { box-sizing: border-box; }
body {
  margin: 0;
  height: 100vh;
  display: flex;
  flex-direction: column;
  overflow: hidden;
  background: #efefef;
  color: #000;
  font: 12px/16px "Noto Sans", sans-serif;
}
h1, h2, h3, ul { margin: 0; padding: 0; font-size: inherit; font-weight: normal; }
button, input, select { font: inherit; color: inherit; margin: 0; padding: 0; }
button { border: 0; background: none; }
svg { display: block; fill: none; stroke: #706f56; overflow: visible; }
svg text { stroke: none; }
.defs { position: absolute; width: 0; height: 0; }

.f-g { fill: #a6d388; }
.f-y { fill: #f3bc16; }
.f-y2 { fill: #f3d96a; }
.f-or { fill: #efb95e; }
.f-r { fill: #e2412b; }
.f-b { fill: #2a91cc; }
.f-lb { fill: #cfe6f7; }
.f-w { fill: #fff; }
.f-gr { fill: #b5b5a8; }
.f-lg { fill: #cfcfcf; }
.s15 { stroke-width: 1.5; }
.dash { stroke-dasharray: 3 2; }
.flip { transform: scaleX(-1); }
.off { opacity: .6; }

/* Title and menus */
.titlebar { flex: none; display: flex; align-items: center; height: 37px; padding-left: 9px; background: #f3f3f3; }
.titlebar h1 { flex: 1; margin-left: 6px; color: #8e8e8e; font-size: 14px; line-height: 20px; }
.logo { width: 19px; height: 14px; }
.win { width: 58px; height: 36px; display: grid; place-items: center; }
.win svg { width: 12px; height: 12px; stroke: #888; }
.menubar { flex: none; display: flex; gap: 16px; height: 22px; padding: 4px 10px 0; border-bottom: 1px solid #d5d5d5; }
.menubar a { color: #a0a0a0; text-decoration: none; }

/* Toolbars */
.toolbar { flex: none; display: flex; gap: 5px; height: 45px; border-bottom: 1px solid #b4b4b4; background: linear-gradient(#fbfbfb, #eee); }
.group { display: flex; align-items: center; }
.grip { width: 14px; height: 18px; background: radial-gradient(circle, #b8b8b8 1px, transparent 1px) 5px 0 / 3px 3px; background-clip: content-box; padding: 0 4px 0 5px; }
.toolbar button { width: 38px; height: 38px; display: grid; place-items: center; border-radius: 3px; }
.toolbar button svg { width: 30px; height: 30px; }
.toolbar button.on { border: 1px solid #a8a8a8; background: #dcdcdc; }
.toolbar button.off { opacity: .8; }
.filters { height: 44px; gap: 3px; }
.filters button { width: 39px; }
.sep { width: 7px; height: 24px; background: linear-gradient(#d0d0d0, #d0d0d0) 3px 0 / 1px 100% no-repeat; }
.glyph { fill: #111; font: italic bold 15px "Noto Sans", sans-serif; }
.axis { fill: #777; font: bold 11px "Noto Sans", sans-serif; }
.deg { fill: #777; font: bold 10px "Noto Sans", sans-serif; }
.ax-x { --up: #a6d388; --sq: #e2412b; --side: #f3bc16; }
.ax-y { --up: #a6d388; --sq: #f3bc16; --side: #e2412b; }
.ax-z { --up: #f3bc16; --sq: #a6d388; --side: #e2412b; }
.v-up { fill: var(--up); }
.v-sq { fill: var(--sq); }
.v-side { fill: var(--side); }

/* Fields */
.combo { display: flex; align-items: center; height: 28px; padding: 0 9px 0 4px; border: 1px solid #a8a8a8; border-radius: 3px; background: linear-gradient(#fdfdfd, #ececec); }
.combo select { flex: 1; min-width: 0; border: 0; outline: 0; background: none; appearance: none; }
.combo svg { width: 18px; height: 18px; margin: 0 4px 0 3px; }
.arrow { width: 0; height: 0; border: 5px solid transparent; border-top: 6px solid #555; border-bottom: 0; }
.arrow.up { border-top: 0; border-bottom: 6px solid #555; }
.w-time { width: 103px; height: 24px; margin: 0 3px 0 4px; }
.w-array { width: 187px; margin-right: 4px; }
.w-comp { width: 74px; margin-right: 1px; }
.w-repr { width: 150px; height: 24px; }
.spinner { display: flex; width: 46px; height: 25px; border: 1px solid #a8a8a8; border-radius: 3px; background: #fff; }
.spinner input { width: 28px; border: 0; padding-left: 4px; background: none; }
.steps { flex: 1; display: flex; flex-direction: column; align-items: center; justify-content: space-evenly; border-left: 1px solid #a8a8a8; }
.max { margin: 0 4px 0 2px; }
.push { display: flex; align-items: center; justify-content: center; gap: 5px; height: 26px; border: 1px solid #a8a8a8; border-radius: 3px; background: linear-gradient(#fdfdfd, #ececec); }
.push svg { width: 16px; height: 16px; }
.push:disabled { color: #8e8e8e; border-color: #bbb; }
.grow { flex: 1; }

/* Left docks */
.workspace { flex: 1; min-height: 0; display: flex; }
.side { flex: none; width: 525px; padding-right: 8px; display: flex; flex-direction: column; }
.pipeline { flex: 0 0 270px; min-height: 0; display: flex; flex-direction: column; overflow: hidden; }
.dock-title { flex: none; display: flex; align-items: center; gap: 3px; height: 20px; padding: 0 1px 0 3px; }
.dock-title h2 { flex: 1; padding-top: 3px; }
.dock-title svg { width: 11px; height: 11px; }
.tree { flex: 1; min-height: 0; display: flex; border: 1px solid #b4b4b4; border-width: 1px 0; background: #fff; }
.tree ul { flex: 1; padding-top: 2px; overflow: hidden; list-style: none; }
.tree li { display: flex; align-items: center; height: 26px; }
.eye { width: 37px; padding-left: 5px; }
.eye svg { width: 16px; height: 14px; }
.eye .open { width: 18px; height: 14px; margin-left: -1px; }
.lead { display: flex; height: 26px; }
.guide { width: 22px; display: grid; place-items: center; background-repeat: no-repeat; }
.line { background-image: linear-gradient(#888, #888); background-size: 1px 100%; background-position: 11px 0; }
.branch { background-image: linear-gradient(#888, #888), linear-gradient(#888, #888); background-size: 1px 100%, 11px 1px; background-position: 11px 0, 11px 13px; }
.stub { width: 17px; background-image: linear-gradient(#888, #888); background-size: 1px 3px; background-position: 11px 0; padding: 0 0 4px 1px; }
.server { width: 8px; height: 14px; }
.guide em { width: 9px; height: 9px; border: 1px solid #777; background: linear-gradient(#000, #000) center / 5px 1px no-repeat #fff; }
.cube { width: 16px; height: 16px; margin: 3px 0 0 1px; }
.name { height: 24px; margin-left: 3px; padding: 4px 5px 2px 3px; border: 1px solid transparent; }
.name b { font-weight: normal; }
.current .lead { background: linear-gradient(90deg, #f2f2f2, #e4e4e4); box-shadow: inset 0 0 0 1px #d8d8d8; }
.current .lead + .name { border-color: #000; }
.current b { background: #efefef; }
.scroll { flex: none; width: 17px; display: flex; flex-direction: column; border-left: 1px solid #b4b4b4; background: #e4e4e4; }
.end { height: 17px; display: grid; place-items: center; background: #f8f8f8; }
.thumb { flex: 88; border: 1px solid #b4b4b4; border-width: 1px 0; background: linear-gradient(90deg, #fff, #f4f4f4); }
.rest { flex: 126; }
.tree-scroll .rest { border-bottom: 1px solid #b4b4b4; }
.panel-scroll .thumb { flex: 156; }
.panel-scroll .rest { flex: 174; border-top: 1px solid #b4b4b4; }
.panel-scroll .last { flex: 45; border-width: 0 0 1px; border-bottom: 1px solid #b4b4b4; }
.splitter { flex: none; height: 8px; display: grid; place-items: center; }
.splitter i { width: 18px; height: 2px; background: radial-gradient(circle, #aaa 1px, transparent 1px) 0 0 / 3px 3px; }

.props { flex: 1; min-height: 0; display: flex; flex-direction: column; padding-bottom: 11px; }
.tabs { flex: none; display: flex; align-items: flex-end; height: 29px; border-bottom: 1px solid #b4b4b4; }
.tab { height: 27px; padding: 2px 14px 0; border: 1px solid #b4b4b4; border-bottom: 0; border-radius: 3px 3px 0 0; background: #dcdcdc; }
.tab.active { height: 29px; margin-bottom: -1px; padding-top: 0; border-left: 0; border-right: 0; background: linear-gradient(#fff, #efefef); }
.actions { display: grid; grid-template-columns: repeat(4, 1fr); gap: 2px; margin: 10px 10px 8px; }
.actions .help { width: 14px; height: 18px; }
.search { display: flex; gap: 2px; margin: 0 10px 8px; }
.search input, .num { border: 1px solid #a8a8a8; border-radius: 3px; background: #fff; height: 26px; padding: 0 3px; }
.search input { flex: 1; }
.search input::placeholder { color: #8a8a8a; }
.search .push { width: 28px; }
.search svg, .view-row .push svg { width: 19px; height: 19px; }
.panel { flex: 1; min-height: 0; display: flex; margin: 0 10px; overflow: hidden; }
.fields { flex: 1; display: flex; flex-direction: column; gap: 7px; margin-top: -9px; }
.fields > * { flex: none; }
h3 { font: bold 13px/16px "DejaVu Sans Condensed", "DejaVu Sans", sans-serif; border-bottom: 1px solid #999; }
.apart { margin-top: 3px; }
.row { display: flex; align-items: center; gap: 10px; }
.row .combo { height: 24px; }
.row .push { height: 25px; }
.cap { width: 80px; }
.num { width: 191px; margin-left: -2px; }
hr { width: 100%; height: 2px; margin: 0 0 2px; border: 0; border-top: 1px solid #999; background: #fff; }
.tight { margin-top: -3px; }
.check { display: flex; align-items: center; gap: 6px; min-height: 19px; }
.check input { width: 17px; height: 17px; border: 1px solid #b8b8b8; background: #fff; appearance: none; display: grid; place-items: center; }
.check input:checked::before { content: ""; width: 11px; height: 12px; background: #000; clip-path: polygon(0 55%, 18% 50%, 36% 72%, 82% 0, 100% 0, 42% 100%, 32% 100%); }
.row input[type="range"] { flex: 1; height: 16px; appearance: none; background: linear-gradient(#a8a8a8 1px, #d4d4d4 1px, #d4d4d4 5px, #a8a8a8 5px) center / 100% 6px no-repeat; }
.row input::-webkit-slider-thumb { appearance: none; width: 16px; height: 16px; border: 1px solid #a0a0a0; border-radius: 3px; background: #fafafa; }
.view-row { gap: 4px; }
.view-row .push, .view-row h3 { height: 27px; }
.view-row .push { width: 33px; }
.view-title { flex: 1; display: flex; align-items: center; gap: 8px; padding-left: 12px; border: 1px solid #b4b4b4; }
.view-title svg { width: 14px; height: 6px; }
.color-row { align-items: flex-start; gap: 5px; }

/* Layout area */
.layout { flex: 1; min-width: 0; display: flex; flex-direction: column; margin-bottom: 1px; }
.layout-tabs { flex: none; display: flex; align-items: flex-end; height: 31px; border-bottom: 1px solid #b4b4b4; }
.ltab { height: 28px; width: 37px; padding: 2px 0 0 1px; border: 1px solid #b4b4b4; border-left: 0; border-bottom: 0; border-radius: 3px 3px 0 0; background: #e6e6e6; }
.ltab.active { width: 122px; height: 30px; margin-bottom: -1px; padding: 0 0 0 14px; display: flex; align-items: center; gap: 4px; border-left: 1px solid #b4b4b4; background: #fff; }
.ltab svg { width: 11px; height: 11px; }
.ltab .winicon { width: 16px; height: 16px; }
.viewbar { flex: none; display: flex; align-items: center; height: 27px; padding-left: 1px; border-left: 1px solid #b4b4b4; background: linear-gradient(#fafafa, #eee); }
.viewbar > button { width: 26px; display: grid; place-items: center; }
.viewbar svg { width: 18px; height: 18px; opacity: .9; }
.threed { color: #706f56; font-weight: bold; font-size: 11px; }
.view-name { flex: 1; text-align: right; margin-right: 11px; color: #000; font: bold 13px/16px "DejaVu Sans Condensed", "DejaVu Sans", sans-serif; }
.viewbar > .box { height: 25px; margin-right: 1px; border: 1px solid #b0b0b0; border-radius: 3px; background: linear-gradient(#fdfdfd, #ececec); }
.box svg { width: 16px; height: 16px; }
.box .small { width: 11px; height: 11px; }
.canvas { flex: 1; min-height: 0; margin: 0 1px 0 2px; border: 2px solid #00f; background: #fff; box-shadow: -1px 1px #b4b4b4; }
.canvas > svg { width: 100%; height: 100%; }
.ticks { fill: #d3d3cf; font: 12px "Liberation Sans", Arial, sans-serif; }
.mid { text-anchor: middle; }
.ticks.end { text-anchor: end; height: auto; }
.legend { fill: #555; font: 20px "Liberation Sans", Arial, sans-serif; }
.legend-title { text-anchor: middle; font-size: 23px; }

/* Status bar */
.status { flex: none; display: flex; height: 26px; padding-right: 24px; overflow: hidden; }
.msg { flex: 560; }
.status button { flex: none; width: 18px; height: 19px; margin: 6px 3px 0 0; display: grid; place-items: center; border: 1px solid #c4c4c4; border-radius: 3px; background: #f8f8f8; }
.status button svg { width: 7px; height: 7px; }
.well { flex: 535; margin: 3px 6px 0 0; border: 1px solid #a0a0a0; border-right-color: #fff; border-bottom: 0; }
.memory { flex: 556; margin-top: 3px; border: 1px solid #a0a0a0; border-bottom: 0; border-radius: 3px 3px 0 0; background: #fff; }
.fill { height: 100%; padding: 5px 9px 0 0; border-right: 1px solid #90b890; background: linear-gradient(#e0ffdc, #b4dcb0); text-align: right; }
```
